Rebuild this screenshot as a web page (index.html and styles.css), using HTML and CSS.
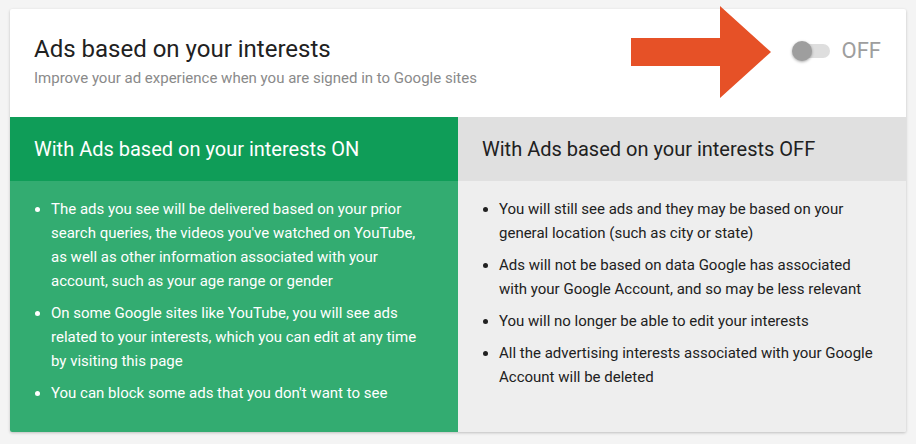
FILE: index.html
```html
<!DOCTYPE html>
<html>
<head>
<meta charset="utf-8">
<link rel="stylesheet" href="styles.css">
</head>
<body>
<div class="card">
  <div class="card-head">
    <div class="head-text">
      <h1 class="title">Ads based on your interests</h1>
      <p class="subtitle">Improve your ad experience when you are signed in to Google sites</p>
    </div>
    <div class="toggle">
      <span class="track"><span class="knob"></span></span>
      <span class="toggle-label">OFF</span>
    </div>
  </div>
  <svg class="arrow" width="142" height="94" viewBox="0 0 142 94">
    <polygon points="0,32 89,32 89,0 140,46 89,92 89,60 0,60" fill="#e65127"/>
  </svg>
  <div class="cols">
    <div class="col col-on">
      <div class="col-head">With Ads based on your interests ON</div>
      <ul class="col-list">
        <li>The ads you see will be delivered based on your prior search queries, the videos you've watched on YouTube, as well as other information associated with your account, such as your age range or gender</li>
        <li>On some Google sites like YouTube, you will see ads related to your interests, which you can edit at any time by visiting this page</li>
        <li>You can block some ads that you don't want to see</li>
      </ul>
    </div>
    <div class="col col-off">
      <div class="col-head">With Ads based on your interests OFF</div>
      <ul class="col-list">
        <li>You will still see ads and they may be based on your general location (such as city or state)</li>
        <li>Ads will not be based on data Google has associated with your Google Account, and so may be less relevant</li>
        <li>You will no longer be able to edit your interests</li>
        <li>All the advertising interests associated with your Google Account will be deleted</li>
      </ul>
    </div>
  </div>
</div>
</body>
</html>
```
FILE: styles.css
```css
html, body {
  margin: 0;
  padding: 0;
  background: #f4f4f4;
}
body {
  padding: 9px 10px 12px 10px;
  font-family: Roboto, "Liberation Sans", sans-serif;
}
.card {
  position: relative;
  background: #fff;
  border-radius: 2px;
  box-shadow: 0 1px 3px rgba(0,0,0,0.22);
  overflow: visible;
}
.card-head {
  display: flex;
  align-items: flex-start;
  justify-content: space-between;
  padding: 24px 25px 29px 24px;
  height: 55px;
}
.title {
  margin: 0;
  font-size: 24px;
  font-weight: 400;
  line-height: 32px;
  color: #212121;
}
.subtitle {
  margin: 3px 0 0 0;
  font-size: 15px;
  line-height: 20px;
  color: #8a8a8a;
}
.toggle {
  display: flex;
  align-items: center;
  gap: 12px;
  margin-top: 4px;
}
.track {
  position: relative;
  display: block;
  width: 34px;
  height: 14px;
  border-radius: 7px;
  background: #dedede;
}
.knob {
  position: absolute;
  left: -4px;
  top: -3px;
  width: 20px;
  height: 20px;
  border-radius: 50%;
  background: #9e9e9e;
  box-shadow: 0 1px 3px rgba(0,0,0,0.35);
}
.toggle-label {
  font-size: 22px;
  line-height: 28px;
  color: #9e9e9e;
}
.arrow {
  position: absolute;
  left: 621px;
  top: -3px;
}
.cols {
  display: grid;
  grid-template-columns: 448px 448px;
}
.col-head {
  height: 64px;
  line-height: 64px;
  padding: 0 24px;
  font-size: 20px;
}
.col-on .col-head {
  background: #0f9d58;
  color: #fff;
}
.col-on {
  background: #33ac71;
  color: #fff;
  border-bottom-left-radius: 2px;
}
.col-off .col-head {
  background: #e0e0e0;
  color: #212121;
}
.col-off {
  background: #eeeeee;
  color: #212121;
  border-bottom-right-radius: 2px;
}
.col-list {
  margin: 0;
  padding: 16px 24px 27px 41px;
  font-size: 15px;
  line-height: 24px;
}
.col-list li {
  margin-bottom: 8px;
}
.col-list li:last-child {
  margin-bottom: 0;
}
```
